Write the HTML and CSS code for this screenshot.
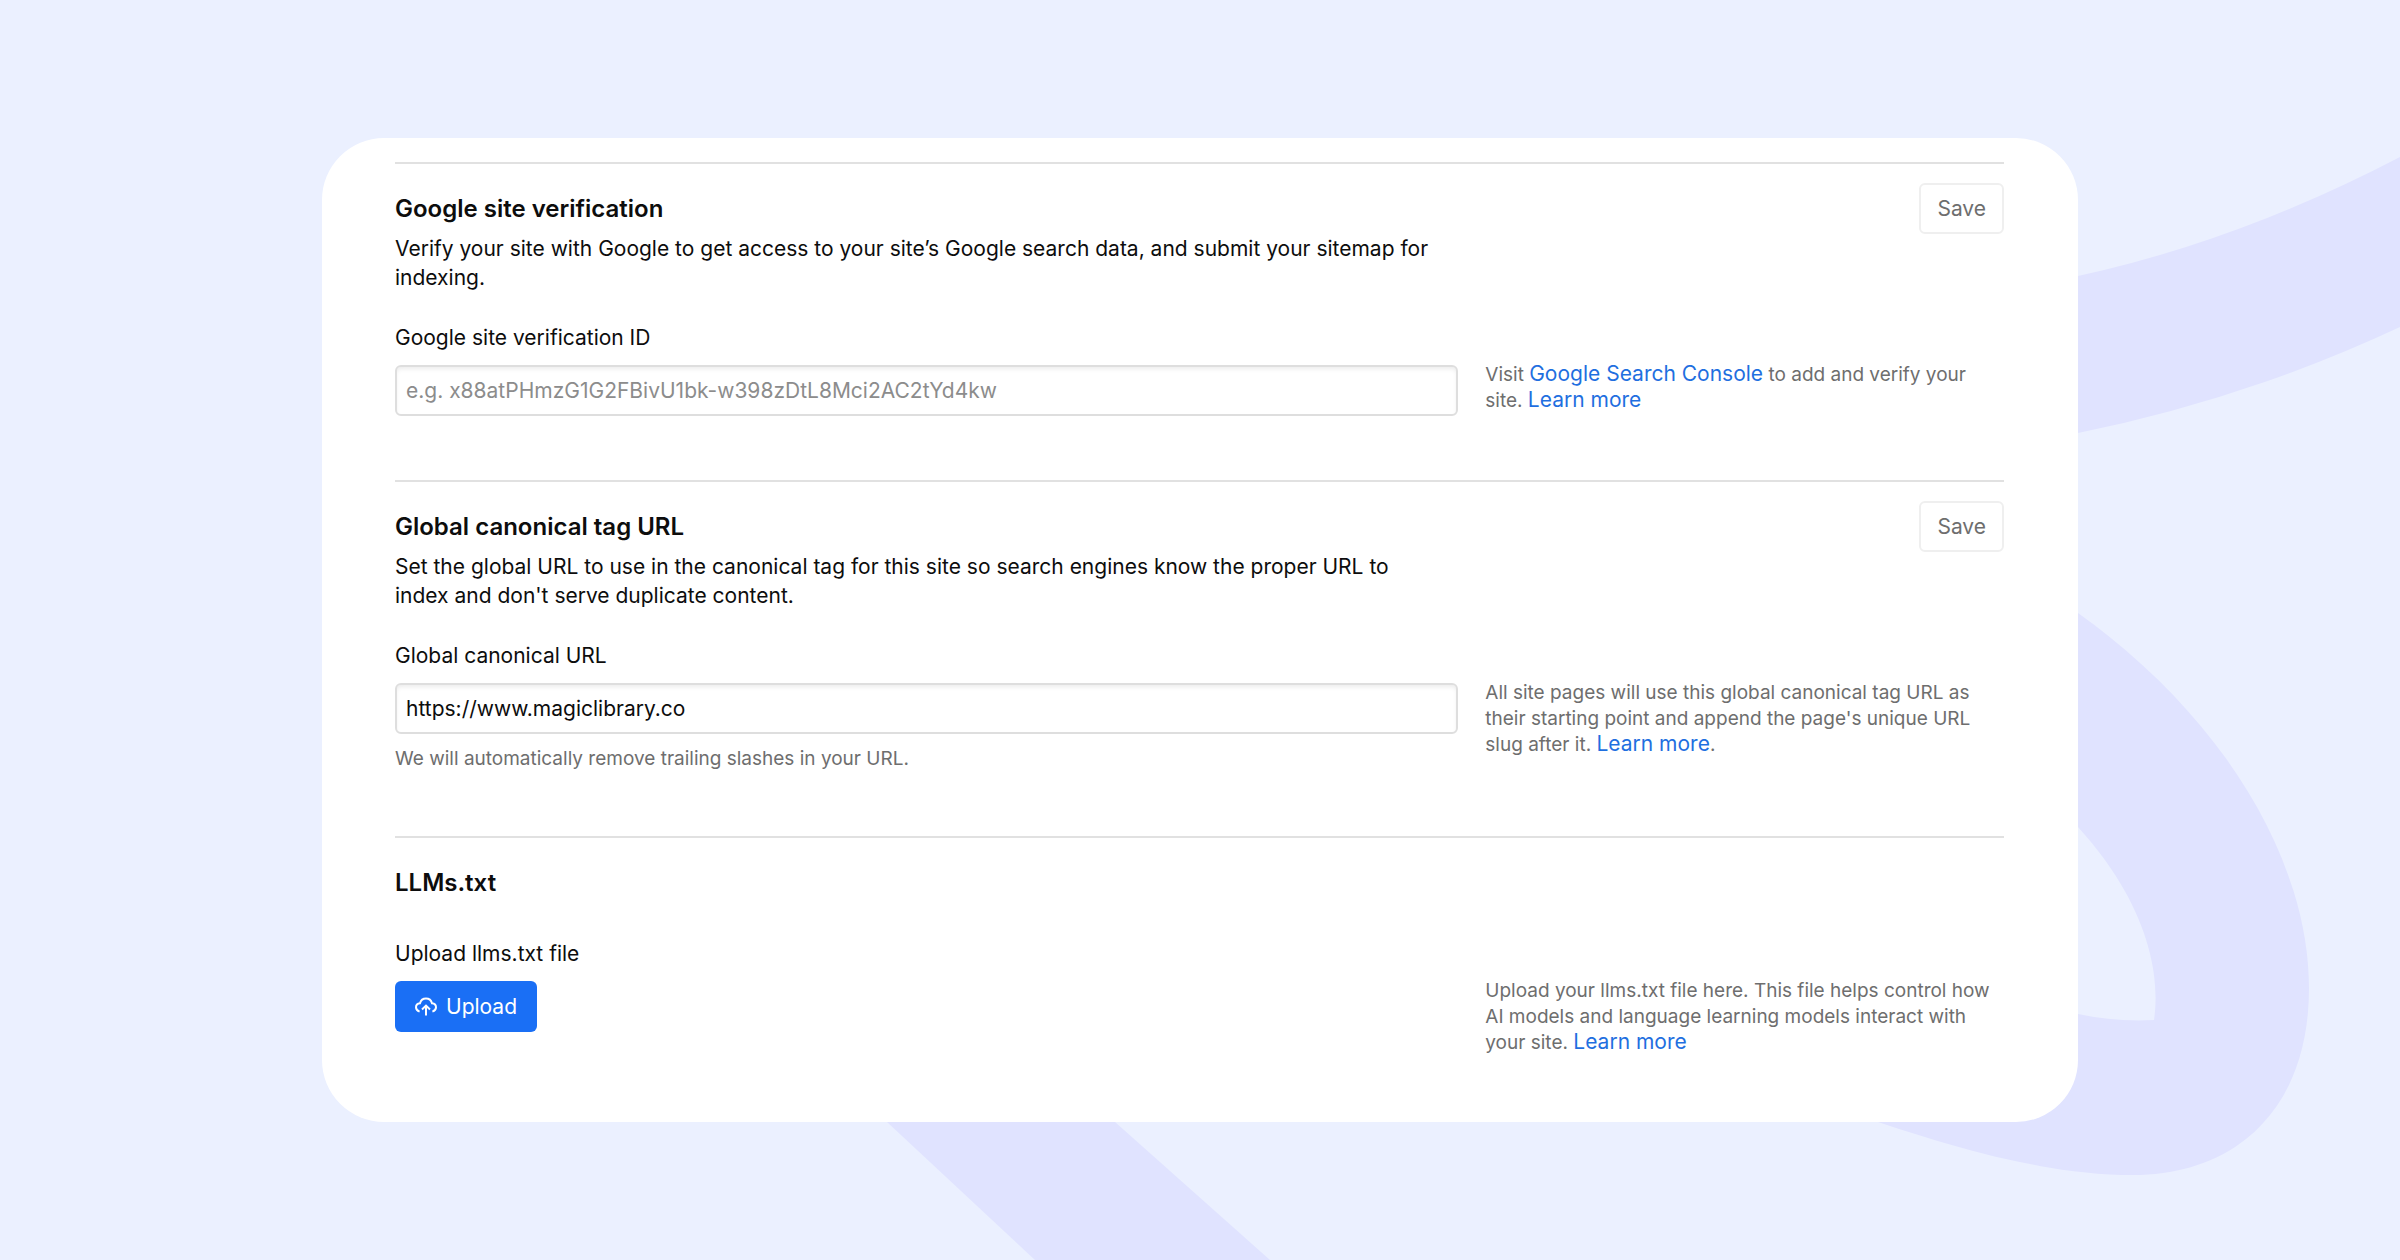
FILE: index.html
```html
<!DOCTYPE html>
<html lang="en">
<head>
<meta charset="utf-8">
<meta name="viewport" content="width=device-width, initial-scale=1">
<title>SEO settings</title>
<link rel="stylesheet" href="styles.css">
</head>
<body>
<svg class="backdrop" viewBox="0 0 2400 1260" preserveAspectRatio="xMidYMid slice" aria-hidden="true">
  <path d="M2060 280 L2078 276 Q2239 241 2400 157 V327 Q2246 399 2078 433 L2060 436 Z"/>
  <path d="M2050 592 L2078 613 C2225 718 2309 862 2309 988 C2309 1110 2235 1175 2133 1175 C2052 1175 1968 1152 1878 1122 L1860 1060 L2060 1010 L2078 1014 Q2115 1022 2154 1020 C2162 965 2140 895 2078 827 L2050 800 Z"/>
  <path d="M866 1102 L1092 1102 L1115 1122 L1270 1260 H1035 L887 1122 Z"/>
</svg>
<main class="card">
  <form class="section">
    <header class="head">
      <div class="intro">
        <h2 class="title">Google site verification</h2>
        <p class="description">Verify your site with Google to get access to your site’s Google search data, and submit your sitemap for indexing.</p>
      </div>
      <button class="button" type="button">Save</button>
    </header>
    <div class="field">
      <label class="label" for="verification-id">Google site verification ID</label>
      <div class="control">
        <input class="input" id="verification-id" type="text" placeholder="e.g. x88atPHmzG1G2FBivU1bk-w398zDtL8Mci2AC2tYd4kw">
      </div>
      <p class="help">Visit <a class="link" href="#">Google Search Console</a> to add and verify your site. <a class="link" href="#">Learn more</a></p>
    </div>
  </form>
  <form class="section">
    <header class="head">
      <div class="intro">
        <h2 class="title">Global canonical tag URL</h2>
        <p class="description">Set the global URL to use in the canonical tag for this site so search engines know the proper URL to index and don't serve duplicate content.</p>
      </div>
      <button class="button" type="button">Save</button>
    </header>
    <div class="field">
      <label class="label" for="canonical-url">Global canonical URL</label>
      <div class="control">
        <input class="input" id="canonical-url" type="text" value="https://www.magiclibrary.co">
        <p class="note">We will automatically remove trailing slashes in your URL.</p>
      </div>
      <p class="help">All site pages will use this global canonical tag URL as their starting point and append the page's unique URL slug after it. <a class="link" href="#">Learn more</a>.</p>
    </div>
  </form>
  <form class="section">
    <header class="head">
      <h2 class="title">LLMs.txt</h2>
    </header>
    <div class="field">
      <label class="label" for="llms-upload">Upload llms.txt file</label>
      <div class="control">
        <button class="button primary" id="llms-upload" type="button">
          <svg class="icon" viewBox="0 0 22 20" aria-hidden="true">
            <path d="M4.6 14.6C2.4 13.9 1 12.3 1 10.3C1 8 2.7 6.4 5 6.2C5.8 3.3 8.1 1.5 11 1.5C13.9 1.5 16.2 3.3 17 6.2C19.3 6.4 21 8 21 10.3C21 12.3 19.6 13.9 17.4 14.6M11 18.5V8.8M7 12.4L11 8.6L15 12.4"/>
          </svg>
          <span>Upload</span>
        </button>
      </div>
      <p class="help">Upload your llms.txt file here. This file helps control how AI models and language learning models interact with your site. <a class="link" href="#">Learn more</a></p>
    </div>
  </form>
</main>
</body>
</html>
```
FILE: styles.css
```css
* {
  box-sizing: border-box;
}

body {
  margin: 0;
  min-height: 100vh;
  display: flex;
  align-items: center;
  justify-content: center;
  padding: 40px;
  background: #ebf0ff;
  color: #0d0d0d;
  font-family: Inter, "Liberation Sans", sans-serif;
  font-size: 21px;
  line-height: 29px;
}

.backdrop {
  position: fixed;
  inset: 0;
  z-index: -1;
  width: 100%;
  height: 100%;
  fill: #e0e3ff;
}

.card {
  width: 100%;
  max-width: 1756px;
  padding: 24px 74px 2px 73px;
  border-radius: 62px;
  background: #fff;
}

.section {
  padding: 19px 0 64px;
  border-top: 2px solid #e1e1e1;
}

.head {
  display: flex;
  align-items: flex-start;
  justify-content: space-between;
  gap: 32px;
  margin-bottom: 31px;
}

.intro {
  max-width: 1036px;
}

.title {
  margin: 10px 0 9px;
  font-size: 24px;
  font-weight: 600;
  line-height: 32px;
}

.description,
.help,
.note {
  margin: 0;
}

.field {
  display: grid;
  grid-template-columns: 41fr 20fr;
  column-gap: 27px;
}

.label {
  grid-column: 1 / -1;
  margin-bottom: 10px;
}

.control {
  padding-top: 3px;
}

.input,
.button {
  height: 51px;
  border-radius: 6px;
  font: inherit;
}

.input {
  display: block;
  width: 100%;
  padding: 0 9px;
  border: 2px solid #dedede;
  background: #fff;
  box-shadow: inset 0 3px 4px -1px #ececec;
  color: #0d0d0d;
}

.input::placeholder {
  color: #8c8c8c;
  opacity: 1;
}

.help,
.note {
  color: #6e6e6e;
  font-size: 19px;
  line-height: 26px;
}

.note {
  margin-top: 12px;
}

.link {
  color: #1f6fe0;
  font-size: 21px;
  line-height: 1;
  text-decoration: none;
}

.button {
  flex: none;
  padding: 0 16px;
  border: 2px solid #efefef;
  background: #fff;
  color: #6e6e6e;
}

.primary {
  display: flex;
  align-items: center;
  gap: 9px;
  padding: 0 20px;
  border: 0;
  background: #1a6ff5;
  color: #fff;
}

.icon {
  width: 22px;
  height: 20px;
  fill: none;
  stroke: currentColor;
  stroke-width: 2;
}
```
